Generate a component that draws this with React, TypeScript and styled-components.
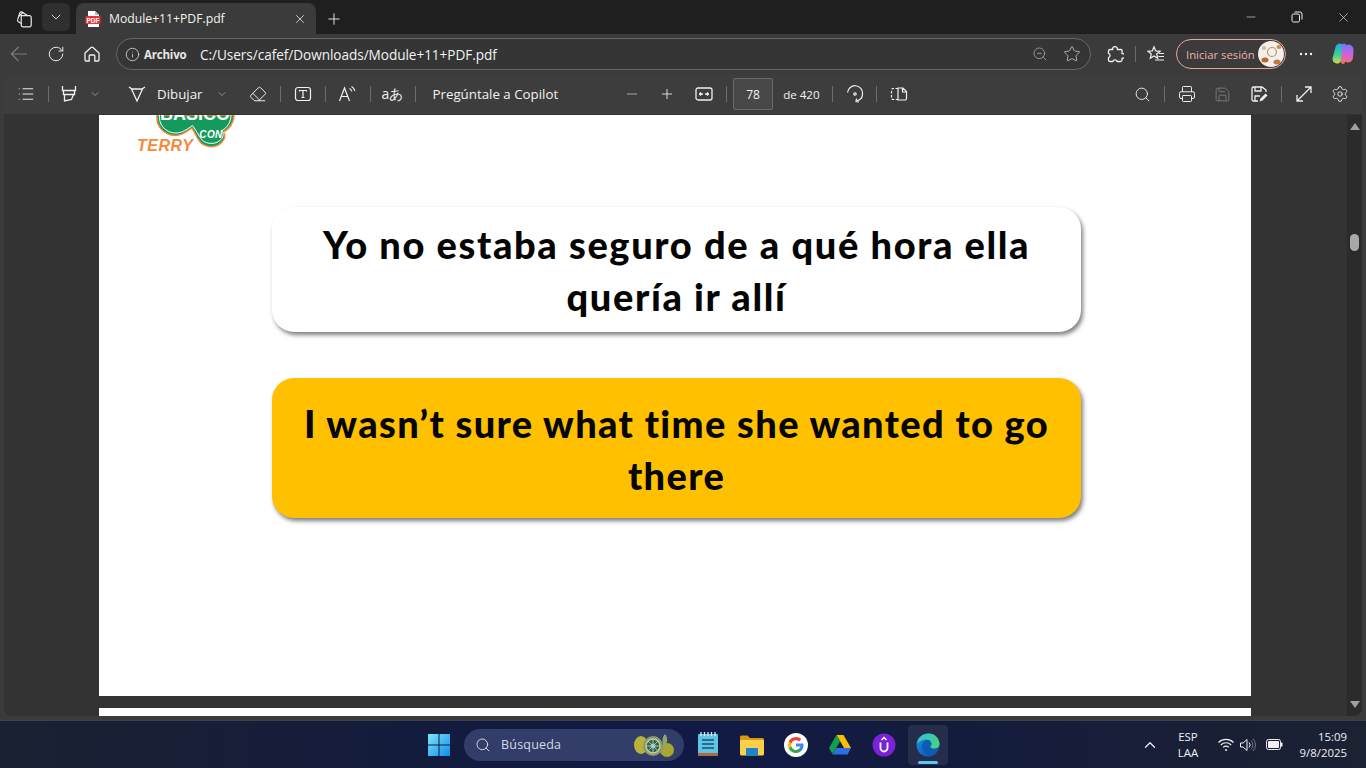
import React from "react"
import styled, { createGlobalStyle } from "styled-components"
import {
  ChevronDown,
  ChevronUp,
  Eraser,
  Info,
  List,
  Minus,
  Plus,
  Printer,
  RotateCw,
  Save,
  Search,
  Settings,
  Star,
  X,
  ZoomOut,
} from "lucide-react"

const GlobalStyle = createGlobalStyle`
  html, body {
    margin: 0;
    padding: 0;
    background: #3b3b3b;
    overflow: hidden;
  }
  * {
    box-sizing: border-box;
  }
`

const Screen = styled.div`
  width: 1366px;
  height: 768px;
  display: flex;
  flex-direction: column;
  overflow: hidden;
  font-family: "Open Sans", "Noto Sans", sans-serif;
  color: #f2f2f2;
  background: #3b3b3b;
`

const TabStrip = styled.div`
  height: 34px;
  flex: none;
  display: flex;
  align-items: flex-end;
  padding-left: 6px;
  background: #1f1f1f;
`

const StripButton = styled.div<{ $w: number; $flush?: boolean; $boxed?: boolean }>`
  width: ${(p) => p.$w}px;
  height: ${(p) => (p.$boxed ? 28 : 31)}px;
  margin-bottom: ${(p) => (p.$boxed ? 3 : 0)}px;
  display: flex;
  align-items: center;
  justify-content: center;
  flex: none;
  border-radius: 6px;
  background: ${(p) => (p.$boxed ? "#2f2f2f" : "transparent")};
`

const Tab = styled.div`
  width: 240px;
  height: 31px;
  margin-left: 6px;
  flex: none;
  display: flex;
  align-items: center;
  padding: 0 9px;
  background: #3b3b3b;
  border-radius: 8px 8px 0 0;
`

const TabTitle = styled.span`
  margin-left: 8px;
  font-size: 12.2px;
  flex: 1;
  white-space: nowrap;
`

const WindowControls = styled.div`
  margin-left: auto;
  display: flex;
  align-items: center;
  height: 34px;
`

const WindowButton = styled.div`
  width: 46px;
  height: 34px;
  display: flex;
  align-items: center;
  justify-content: center;
`

const AddressRow = styled.div`
  height: 40px;
  flex: none;
  display: flex;
  align-items: center;
  background: #3b3b3b;
`

const NavButton = styled.div<{ $w: number; $ml?: number }>`
  width: ${(p) => p.$w}px;
  margin-left: ${(p) => p.$ml ?? 0}px;
  flex: none;
  display: flex;
  align-items: center;
  justify-content: center;
`

const AddressPill = styled.div`
  width: 975px;
  height: 32px;
  margin-left: 6px;
  flex: none;
  display: flex;
  align-items: center;
  padding: 0 2px 0 8px;
  border: 1px solid #666;
  border-radius: 16px;
  background: #353535;
`

const SchemeLabel = styled.span`
  margin-left: 4px;
  font-size: 11.5px;
  font-weight: 700;
  letter-spacing: -0.2px;
  color: #e8e8e8;
  width: 56px;
  flex: none;
`

const AddressText = styled.span`
  font-size: 13.6px;
  letter-spacing: -0.05px;
  flex: 1;
  white-space: nowrap;
`

const PillIcon = styled.div<{ $w: number }>`
  width: ${(p) => p.$w}px;
  flex: none;
  display: flex;
  justify-content: center;
`

const VerticalRule = styled.div<{ $w?: number }>`
  width: ${(p) => p.$w ?? 9}px;
  flex: none;
  display: flex;
  justify-content: center;
  &::before {
    content: "";
    width: 1px;
    height: 16px;
    background: #6c6c6c;
  }
`

const SignInPill = styled.div`
  width: 110px;
  height: 30px;
  margin-left: 3px;
  flex: none;
  display: flex;
  align-items: center;
  justify-content: space-between;
  padding: 0 1px 0 9px;
  border: 1px solid #e8a59c;
  border-radius: 15px;
  font-size: 11.3px;
  color: #f0b0a8;
  white-space: nowrap;
`

const Avatar = styled.div`
  width: 26px;
  height: 26px;
  border-radius: 50%;
  overflow: hidden;
  flex: none;
  display: flex;
`

const PdfToolbar = styled.div`
  height: 41px;
  flex: none;
  margin: 0 4px;
  display: flex;
  align-items: center;
  padding: 0 4px;
  background: #3d3d3d;
  border-radius: 8px 8px 0 0;
  border-bottom: 1px solid #333;
`

const Tool = styled.div<{ $w: number; $ml?: number }>`
  width: ${(p) => p.$w}px;
  margin-left: ${(p) => p.$ml ?? 0}px;
  flex: none;
  display: flex;
  align-items: center;
  justify-content: center;
`

const ToolLabel = styled.span<{ $ml?: number; $size?: number }>`
  margin-left: ${(p) => p.$ml ?? 0}px;
  font-size: ${(p) => p.$size ?? 13.3}px;
  flex: none;
  white-space: nowrap;
`

const PageInput = styled.div`
  width: 40px;
  height: 32px;
  margin-left: 5px;
  flex: none;
  display: flex;
  align-items: center;
  justify-content: center;
  font-size: 12px;
  background: #484848;
  border: 1px solid #6a6a6a;
  border-radius: 2px;
`

const ToolGroupRight = styled.div`
  margin-left: auto;
  display: flex;
  align-items: center;
  margin-right: 4px;
`

const Viewer = styled.div`
  flex: 1;
  min-height: 0;
  margin: 0 4px 4px;
  display: flex;
  background: #333333;
  border-radius: 0 0 8px 8px;
  overflow: hidden;
`

const PageColumn = styled.div`
  flex: 1;
  min-width: 0;
  padding-left: 95px;
  display: flex;
  flex-direction: column;
  gap: 12px;
`

const Page = styled.div`
  width: 1152px;
  height: 581px;
  flex: none;
  background: #ffffff;
  display: flex;
  flex-direction: column;
  padding-left: 173px;
`

const NextPage = styled.div`
  width: 1152px;
  flex: 1;
  background: #ffffff;
`

const LogoWrap = styled.div`
  margin-left: -136px;
  height: 40px;
  flex: none;
  display: flex;
`

const PhraseCard = styled.div<{ $accent?: boolean; $h: number; $mt: number; $pt: number }>`
  width: 809px;
  height: ${(p) => p.$h}px;
  margin-top: ${(p) => p.$mt}px;
  padding-top: ${(p) => p.$pt}px;
  flex: none;
  background: ${(p) => (p.$accent ? "#ffc000" : "#ffffff")};
  border-radius: 22px;
  box-shadow: 2px 3px 4px rgba(0, 0, 0, 0.5);
  text-align: center;
  font-family: Lato, "Open Sans", sans-serif;
  font-weight: 900;
  font-size: 38px;
  line-height: 52px;
  letter-spacing: ${(p) => (p.$accent ? 1.35 : 1.6)}px;
  color: #050505;
  white-space: nowrap;
`

const ScrollTrack = styled.div`
  width: 15px;
  flex: none;
  display: flex;
  flex-direction: column;
  align-items: center;
  padding: 8px 0;
  background: #2b2b2b;
`

const ScrollThumb = styled.div`
  width: 9px;
  height: 17px;
  margin-top: 104px;
  border-radius: 5px;
  background: #a8a8a8;
`

const ScrollArrow = styled.div<{ $down?: boolean }>`
  width: 0;
  height: 0;
  border-left: 5px solid transparent;
  border-right: 5px solid transparent;
  ${(p) => (p.$down ? "border-top: 7px solid #a0a0a0; margin-top: auto;" : "border-bottom: 7px solid #a0a0a0;")}
`

const Taskbar = styled.div`
  height: 48px;
  flex: none;
  display: flex;
  align-items: center;
  padding-left: 417px;
  background: linear-gradient(90deg, #1a2132 0%, #141c3d 30%, #101a45 50%, #141c3d 70%, #1b2232 100%);
  border-top: 1px solid #3d414c;
`

const TaskIcon = styled.div<{ $active?: boolean; $ml?: number; $w?: number }>`
  width: ${(p) => p.$w ?? 40}px;
  height: 40px;
  margin-left: ${(p) => p.$ml ?? 4}px;
  flex: none;
  position: relative;
  display: flex;
  align-items: center;
  justify-content: center;
  border-radius: 4px;
  background: ${(p) => (p.$active ? "#262d4b" : "transparent")};
  ${(p) =>
    p.$active &&
    `&::after {
      content: "";
      position: absolute;
      left: 10px;
      bottom: 1px;
      width: 20px;
      height: 3px;
      border-radius: 2px;
      background: #5cc8f5;
    }`}
`

const SearchBox = styled.div`
  width: 220px;
  height: 32px;
  margin-left: 3px;
  flex: none;
  display: flex;
  align-items: center;
  padding: 0 10px 0 11px;
  border-radius: 16px;
  background: #323d69;
  font-size: 12.5px;
  letter-spacing: 0.2px;
  color: #d6d9e4;
`

const SearchText = styled.span`
  margin-left: 10px;
  flex: 1;
`

const Tray = styled.div`
  margin-left: auto;
  display: flex;
  align-items: center;
  padding-right: 19px;
`

const TrayStack = styled.div<{ $w: number; $align: string; $ml?: number }>`
  width: ${(p) => p.$w}px;
  margin-left: ${(p) => p.$ml ?? 0}px;
  flex: none;
  display: flex;
  flex-direction: column;
  align-items: ${(p) => p.$align};
  font-size: 11.4px;
  line-height: 16px;
  color: #eef0f4;
`

const stroke = { strokeWidth: 1.3, color: "#f0f0f0" }

const Tabs = () => (
  <svg width="20" height="20" viewBox="0 0 18 18" fill="none" stroke="#e6e6e6" strokeWidth="1.1">
    <path d="M6.500 6h7.500a1.500 1.500 0 0 1 1.500 1.500v7a1.500 1.500 0 0 1-1.500 1.500H8a1.500 1.500 0 0 1-1.500-1.500z" />
    <path d="M6.500 13l-2.600-1.600a1.500 1.500 0 0 1-.6-1.800L5.200 3.500a1.500 1.500 0 0 1 1.800-.9l5.500 3.400" />
    <path d="M4.500 6.500l3.700-3.600" />
  </svg>
)

const PdfBadge = () => (
  <svg width="16" height="16" viewBox="0 0 16 16">
    <path d="M3 0h7l4 4v12H3z" fill="#fff" />
    <path d="M10 0l4 4h-4z" fill="#bbb" />
    <rect x="0.500" y="5" width="15" height="8" rx="1" fill="#e8353a" />
    <text x="8" y="11.500" textAnchor="middle" fontSize="6.500" fontWeight="700" fontFamily="Liberation Sans" fill="#fff">
      PDF
    </text>
  </svg>
)

const BackArrow = () => (
  <svg width="18" height="18" viewBox="0 0 18 18" fill="none" stroke="#7d7d7d" strokeWidth="1.200">
    <path d="M17 9H1.500M8.500 2L1.500 9l7 7" />
  </svg>
)

const HomeIcon = () => (
  <svg width="18" height="18" viewBox="0 0 18 18" fill="none" stroke="#f0f0f0" strokeWidth="1.300">
    <path d="M2 8l6-5.500a1.500 1.500 0 0 1 2 0L16 8v7a1 1 0 0 1-1 1h-3.200v-5a1 1 0 0 0-1-1H7.200a1 1 0 0 0-1 1v5H3a1 1 0 0 1-1-1z" />
  </svg>
)

const ExtensionIcon = () => (
  <svg width="18" height="18" viewBox="0 0 18 18" fill="none" stroke="#f0f0f0" strokeWidth="1.300" strokeLinejoin="round">
    <path d="M4 4.500h2.800a2.300 2.300 0 1 1 4.400 0H15a1 1 0 0 1 1 1v3.200a2.300 2.300 0 1 1 0 4.400V15a1.500 1.500 0 0 1-1.500 1.500H11a2.200 2.200 0 0 0-4.200 0H4A1.500 1.500 0 0 1 2.500 15v-2.500a2.200 2.200 0 0 0 0-4.200V6A1.500 1.500 0 0 1 4 4.500z" />
  </svg>
)

const FavList = () => (
  <svg width="18" height="18" viewBox="0 0 18 18" fill="none" stroke="#f0f0f0" strokeWidth="1.200">
    <path d="M7 1.800l1.700 4.100 4.300.3-3.300 2.800 1 4.200L7 11l-3.700 2.200 1-4.200L1 6.200l4.300-.3z" />
    <path d="M12 8.500h5M11.500 11.500h5.500M8 15h9" />
  </svg>
)

const Copilot = () => (
  <svg width="24" height="24" viewBox="0 0 24 24" fill="none" strokeLinecap="round">
    <defs>
      <linearGradient id="copA" gradientUnits="userSpaceOnUse" x1="8" y1="1" x2="7" y2="23">
        <stop offset="0" stopColor="#2f9df2" />
        <stop offset="0.550" stopColor="#36d68c" />
        <stop offset="1" stopColor="#f4d73f" />
      </linearGradient>
      <linearGradient id="copB" gradientUnits="userSpaceOnUse" x1="17" y1="2" x2="16" y2="23">
        <stop offset="0" stopColor="#6f7bf5" />
        <stop offset="0.550" stopColor="#d95fd8" />
        <stop offset="1" stopColor="#f5793f" />
      </linearGradient>
    </defs>
    <path d="M17.500 7.500L17 15.500" stroke="url(#copB)" strokeWidth="10" />
    <path d="M9 6L6 17" stroke="url(#copA)" strokeWidth="9" />
    <path d="M13 3.500L12 20" stroke="url(#copB)" strokeWidth="4" />
  </svg>
)

const AvatarArt = () => (
  <svg width="26" height="26" viewBox="0 0 26 26">
    <rect width="26" height="26" fill="#f4efe8" />
    <circle cx="14" cy="11" r="4.500" fill="none" stroke="#b8956f" strokeWidth="1.200" />
    <ellipse cx="7" cy="19" rx="3.500" ry="2.500" fill="#b5682f" />
    <ellipse cx="19" cy="21" rx="3.500" ry="2.500" fill="#c07a40" />
    <ellipse cx="21" cy="6" rx="2.500" ry="2" fill="#c9905f" />
    <ellipse cx="6" cy="7" rx="2" ry="2" fill="#d2b79a" />
  </svg>
)

const Highlighter = () => (
  <svg width="18" height="18" viewBox="0 0 18 18" fill="none" stroke="#f0f0f0" strokeWidth="1.300">
    <path d="M2.500 1v4.500h13V1M3.500 5.500v4h11v-4M4.500 9.500V16l7-1.500 2-5" />
  </svg>
)

const DrawPen = () => (
  <svg width="18" height="18" viewBox="0 0 18 18" fill="none" stroke="#f0f0f0" strokeWidth="1.300">
    <path d="M1 2l3 2h10l3-2M3.500 4L9 16l5.500-12" />
  </svg>
)

const TextBox = () => (
  <svg width="18" height="18" viewBox="0 0 18 18" fill="none" stroke="#f0f0f0" strokeWidth="1.200">
    <rect x="1.500" y="2.500" width="15" height="13" rx="2.500" />
    <path d="M5.500 6.500V5.500h7v1M9 5.500v7M7.500 12.500h3" />
  </svg>
)

const ReadAloud = () => (
  <svg width="18" height="18" viewBox="0 0 18 18" fill="none" stroke="#f0f0f0" strokeWidth="1.200">
    <path d="M1.500 16L6.500 3l5 13M3.200 11.500h6.600" />
    <path d="M11.500 3.500c1.200.6 2 1.500 2.300 3M13.500 1.500c1.800.9 3 2.400 3.300 4.500" />
  </svg>
)

const FitWidth = () => (
  <svg width="18" height="16" viewBox="0 0 18 16" fill="none" stroke="#f0f0f0" strokeWidth="1.300">
    <rect x="1" y="2" width="16" height="12" rx="2" />
    <path d="M4 8h4M4.500 8l1.500-1.500M4.500 8L6 9.500M10 8h4M13.500 8L12 6.500M13.500 8L12 9.500" />
  </svg>
)

const RotatePage = () => (
  <svg width="18" height="18" viewBox="0 0 18 18" fill="none" stroke="#f0f0f0" strokeWidth="1.200">
    <path d="M1.500 7.500A7.500 7.500 0 0 1 16.500 9c0 3.500-2.500 6-5.500 6.800" />
    <path d="M10.500 13.500L10 16.500l3 .5" />
    <circle cx="9" cy="9" r="1.200" />
  </svg>
)

const PageView = () => (
  <svg width="18" height="16" viewBox="0 0 18 16" fill="none" stroke="#f0f0f0" strokeWidth="1.200">
    <path d="M8 2.500H3a1.500 1.500 0 0 0-1.500 1.500v8A1.500 1.500 0 0 0 3 13.500h5" strokeDasharray="2.500 1.500" />
    <path d="M8 2h5l3.500 3.500V12.500A1.500 1.500 0 0 1 15 14H8zM12.500 2v4h4" />
  </svg>
)

const SaveEdit = () => (
  <svg width="18" height="18" viewBox="0 0 18 18" fill="none" stroke="#f0f0f0" strokeWidth="1.300">
    <path d="M8 16H3.500A1.500 1.500 0 0 1 2 14.500v-11A1.500 1.500 0 0 1 3.500 2H12l4 3v2" />
    <path d="M5 2v4h6V2M5 16v-5h5" />
    <path d="M9.500 16.500l1-3 5-5 2 2-5 5z" fill="#f0f0f0" stroke="none" />
  </svg>
)

const ExpandDiagonal = () => (
  <svg width="18" height="18" viewBox="0 0 18 18" fill="none" stroke="#f0f0f0" strokeWidth="1.300">
    <path d="M2 16L16 2M10 2h6v6M2 10v6h6" />
  </svg>
)

const RestoreIcon = () => (
  <svg width="12" height="12" viewBox="0 0 12 12" fill="none" stroke="#f0f0f0" strokeWidth="1">
    <rect x="1" y="3" width="7.500" height="8" rx="1.500" />
    <path d="M3.500 1h5.500A2 2 0 0 1 11 3v5.500" />
  </svg>
)

const Logo = () => (
  <svg width="120" height="40" viewBox="0 0 120 40">
    <path
      d="M21 0c-1 8 3 17 14 20 9 2 15-3 21-7 3 5 4 9 9 15 6 5 16 5 21-1 4-4 3-8 1-10 7-3 11-10 11-17z"
      fill="#139a5c"
      stroke="#f58a3a"
      strokeWidth="1.500"
    />
    <path
      d="M23.500 0c-1 7 3 15 12 17.500 8 2 14-2 21-7 4 5 5 9 10 15 5 4 14 4 18.500-1 3-3 2.500-7 .5-9 6-2.500 9.500-9 9.500-15.500"
      fill="none"
      stroke="#fff"
      strokeWidth="1"
    />
    <text x="59" y="5" textAnchor="middle" fontSize="18" fontWeight="700" fontFamily="Liberation Sans" fill="#fff">
      BASICO
    </text>
    <text x="75" y="23" textAnchor="middle" fontSize="10" fontWeight="700" fontStyle="italic" fontFamily="Liberation Sans" letterSpacing="0.400" fill="#fff">
      CON
    </text>
    <text x="1" y="36" fontSize="16" fontWeight="700" fontStyle="italic" fontFamily="Liberation Sans" letterSpacing="0.500" fill="#f58a3a">
      TERRY
    </text>
  </svg>
)

const WinLogo = () => (
  <svg width="24" height="24" viewBox="0 0 24 24">
    <defs>
      <linearGradient id="win" x1="0" y1="0" x2="1" y2="1">
        <stop offset="0" stopColor="#7fe3fb" />
        <stop offset="1" stopColor="#0f8ee8" />
      </linearGradient>
    </defs>
    <path d="M1 1h10.500v10.500H1zM12.500 1H23v10.500H12.500zM1 12.500h10.500V23H1zM12.500 12.500H23V23H12.500z" fill="url(#win)" />
  </svg>
)

const SearchArt = () => (
  <svg width="40" height="28" viewBox="0 0 40 28">
    <ellipse cx="7" cy="14" rx="7" ry="9" fill="#b7b23a" />
    <ellipse cx="33" cy="19" rx="7" ry="7" fill="#a6a832" />
    <path d="M30 16c-3-6-1-11 1-13 3 3 3 9-1 13z" fill="#8fa86a" />
    <circle cx="19" cy="15" r="10" fill="#8d9480" />
    <circle cx="19" cy="15" r="7" fill="#3a5f5a" stroke="#b6d66c" strokeWidth="1.500" />
    <circle cx="19" cy="15" r="2.500" fill="#63c6d8" />
    <path d="M19 8v14M12 15h14M14 10l10 10M24 10L14 20" stroke="#bdd8c0" strokeWidth="0.800" />
  </svg>
)

const NotepadIcon = () => (
  <svg width="24" height="26" viewBox="0 0 24 26">
    <rect x="2" y="2" width="20" height="22" rx="1" fill="#5ec3e4" />
    <rect x="2" y="21" width="20" height="3" fill="#b06a3a" />
    <path d="M6 8h12M6 12h12M6 16h12" stroke="#14506e" strokeWidth="1.500" />
    <path d="M5 0v4M8.500 0v4M12 0v4M15.500 0v4M19 0v4" stroke="#cfeefa" strokeWidth="1.300" />
  </svg>
)

const FolderIcon = () => (
  <svg width="24" height="22" viewBox="0 0 24 22">
    <path d="M0 3a1.500 1.500 0 0 1 1.500-1.500h6L10 4h12.500A1.500 1.500 0 0 1 24 5.500V8H0z" fill="#d79a13" />
    <path d="M0 6h24v14a1.500 1.500 0 0 1-1.500 1.500h-21A1.500 1.500 0 0 1 0 20z" fill="#fbcf4a" />
    <path d="M7 14h10a1 1 0 0 1 1 1v6.500H6V15a1 1 0 0 1 1-1z" fill="#1a86d0" />
  </svg>
)

const GoogleIcon = () => (
  <svg width="24" height="24" viewBox="0 0 24 24">
    <circle cx="12" cy="12" r="12" fill="#fff" />
    <path d="M19.500 12.200c0-.6 0-1.100-.2-1.600H12v3h4.200a3.600 3.600 0 0 1-1.600 2.400v2h2.600c1.500-1.400 2.300-3.400 2.300-5.800z" fill="#4285f4" />
    <path d="M12 20c2.100 0 3.900-.7 5.200-1.900l-2.600-2a4.800 4.800 0 0 1-7.200-2.500H4.800v2A8 8 0 0 0 12 20z" fill="#34a853" />
    <path d="M7.400 13.600a4.800 4.800 0 0 1 0-3.100v-2H4.800a8 8 0 0 0 0 7.200z" fill="#fbbc05" />
    <path d="M12 7.200c1.200 0 2.200.4 3 1.200l2.300-2.300A8 8 0 0 0 4.800 8.400l2.600 2A4.800 4.800 0 0 1 12 7.200z" fill="#ea4335" />
  </svg>
)

const DriveIcon = () => (
  <svg width="22" height="20" viewBox="0 0 22 20">
    <path d="M7.500 0h7L22 13h-7z" fill="#fbbc04" />
    <path d="M7.500 0L0 13l3.500 6L11 6.500z" fill="#12a14b" />
    <path d="M3.500 19.500L7 13h15l-3.500 6.500z" fill="#2f6fe4" />
  </svg>
)

const ProtonIcon = () => (
  <svg width="24" height="24" viewBox="0 0 24 24">
    <circle cx="12" cy="12" r="11.500" fill="#7a22d6" />
    <path d="M8.500 9.500V15a3.500 3.500 0 0 0 7 0V9.500" fill="none" stroke="#fff" strokeWidth="1.800" />
    <path d="M9.500 7L12 4.500 14.500 7" fill="none" stroke="#fff" strokeWidth="1.500" />
  </svg>
)

const EdgeIcon = () => (
  <svg width="24" height="24" viewBox="0 0 24 24">
    <defs>
      <linearGradient id="edgeA" x1="0" y1="0" x2="1" y2="1">
        <stop offset="0" stopColor="#34c1d6" />
        <stop offset="1" stopColor="#4fd46f" />
      </linearGradient>
      <linearGradient id="edgeB" x1="0" y1="0" x2="1" y2="1">
        <stop offset="0" stopColor="#1a8fe0" />
        <stop offset="1" stopColor="#0b4fa8" />
      </linearGradient>
    </defs>
    <circle cx="12" cy="12" r="11.500" fill="url(#edgeB)" />
    <path d="M1 11C2 4.500 7 .5 12.500.5 19 .5 23.500 5.500 23.500 11c0 3-2.500 4.500-5.500 4.500-2 0-3.500-.6-3.500-1.500 2.500-3 .5-7.500-3.500-7.500C7 6.500 3 8 1 11z" fill="url(#edgeA)" />
    <path d="M6 14c0-3.500 2-6 5-7 2.500 0 4 2 3.500 4.500-.5 1-1 1.500-1 2.500 0 1.500 2 2.500 4.500 2.500 1.500 0 3-.5 4-1.500-1 3-3 6-5.500 7-5 1-10.500-3-10.500-8z" fill="#0d5bb5" />
  </svg>
)

const WifiIcon = () => (
  <svg width="16" height="14" viewBox="0 0 16 14" fill="none" stroke="#f0f0f0" strokeWidth="1.100">
    <path d="M.5 4.500a10.500 10.500 0 0 1 15 0M2.800 7a7.200 7.200 0 0 1 10.400 0M5.200 9.400a3.800 3.800 0 0 1 5.600 0" />
    <circle cx="8" cy="12" r="1" fill="#f0f0f0" stroke="none" />
  </svg>
)

const VolumeIcon = () => (
  <svg width="16" height="14" viewBox="0 0 16 14" fill="none" stroke="#f0f0f0" strokeWidth="1">
    <path d="M.5 5h2.500L7 1.500v11L3 9H.5z" />
    <path d="M9 4.500a3.500 3.500 0 0 1 0 5" />
    <path d="M11 2.500a6.500 6.500 0 0 1 0 9M13 .8a9 9 0 0 1 0 12.400" stroke="#777" />
  </svg>
)

const BatteryIcon = () => (
  <svg width="17" height="11" viewBox="0 0 17 11">
    <rect x="0.500" y="0.500" width="14" height="10" rx="2" fill="none" stroke="#f0f0f0" />
    <rect x="2" y="2" width="11" height="7" rx="0.800" fill="#f0f0f0" />
    <rect x="15" y="3.500" width="1.500" height="4" rx="0.500" fill="#f0f0f0" />
  </svg>
)

const App: React.FC = () => (
  <Screen>
    <GlobalStyle />
    <TabStrip>
      <StripButton $w={36}>
        <Tabs />
      </StripButton>
      <StripButton $w={28} $boxed>
        <ChevronDown size={16} {...stroke} />
      </StripButton>
      <Tab>
        <PdfBadge />
        <TabTitle>Module+11+PDF.pdf</TabTitle>
        <X size={14} {...stroke} />
      </Tab>
      <StripButton $w={36}>
        <Plus size={18} strokeWidth={1.2} color="#f0f0f0" />
      </StripButton>
      <WindowControls>
        <WindowButton>
          <Minus size={14} strokeWidth={1} color="#f0f0f0" />
        </WindowButton>
        <WindowButton>
          <RestoreIcon />
        </WindowButton>
        <WindowButton>
          <X size={15} strokeWidth={1} color="#f0f0f0" />
        </WindowButton>
      </WindowControls>
    </TabStrip>

    <AddressRow>
      <NavButton $w={38}>
        <BackArrow />
      </NavButton>
      <NavButton $w={36}>
        <RotateCw size={18} {...stroke} />
      </NavButton>
      <NavButton $w={36}>
        <HomeIcon />
      </NavButton>
      <AddressPill>
        <Info size={15} strokeWidth={1.2} color="#e6e6e6" />
        <SchemeLabel>Archivo</SchemeLabel>
        <AddressText>C:/Users/cafef/Downloads/Module+11+PDF.pdf</AddressText>
        <PillIcon $w={32}>
          <ZoomOut size={16} strokeWidth={1.2} color="#a8a8a8" />
        </PillIcon>
        <PillIcon $w={32}>
          <Star size={18} strokeWidth={1.2} color="#b8b8b8" />
        </PillIcon>
      </AddressPill>
      <NavButton $w={32} $ml={8}>
        <ExtensionIcon />
      </NavButton>
      <VerticalRule $w={8} />
      <NavButton $w={34}>
        <FavList />
      </NavButton>
      <SignInPill>
        Iniciar sesión
        <Avatar>
          <AvatarArt />
        </Avatar>
      </SignInPill>
      <NavButton $w={40}>
        <svg width="14" height="4" viewBox="0 0 14 4" fill="#f0f0f0">
          <circle cx="2" cy="2" r="1.200" />
          <circle cx="7" cy="2" r="1.200" />
          <circle cx="12" cy="2" r="1.200" />
        </svg>
      </NavButton>
      <NavButton $w={34}>
        <Copilot />
      </NavButton>
    </AddressRow>

    <PdfToolbar>
      <Tool $w={36}>
        <List size={18} {...stroke} />
      </Tool>
      <VerticalRule $w={8} />
      <Tool $w={34}>
        <Highlighter />
      </Tool>
      <Tool $w={18}>
        <ChevronDown size={12} strokeWidth={1.2} color="#c4c4c4" />
      </Tool>
      <Tool $w={30} $ml={18}>
        <DrawPen />
      </Tool>
      <ToolLabel $ml={5}>Dibujar</ToolLabel>
      <Tool $w={18} $ml={11}>
        <ChevronDown size={12} strokeWidth={1.2} color="#c4c4c4" />
      </Tool>
      <Tool $w={34} $ml={10}>
        <Eraser size={18} {...stroke} />
      </Tool>
      <VerticalRule $w={10} />
      <Tool $w={36}>
        <TextBox />
      </Tool>
      <VerticalRule $w={8} />
      <Tool $w={36}>
        <ReadAloud />
      </Tool>
      <VerticalRule $w={10} />
      <Tool $w={34}>
        <ToolLabel $size={14}>aあ</ToolLabel>
      </Tool>
      <VerticalRule $w={12} />
      <ToolLabel $ml={11}>Pregúntale a Copilot</ToolLabel>
      <Tool $w={36} $ml={56}>
        <Minus size={16} strokeWidth={1.5} color="#a8a8a8" />
      </Tool>
      <Tool $w={34}>
        <Plus size={16} {...stroke} />
      </Tool>
      <Tool $w={40}>
        <FitWidth />
      </Tool>
      <VerticalRule $w={4} />
      <PageInput>78</PageInput>
      <ToolLabel $ml={10} $size={11.6}>
        de 420
      </ToolLabel>
      <VerticalRule $w={26} />
      <Tool $w={18}>
        <RotatePage />
      </Tool>
      <VerticalRule $w={26} />
      <Tool $w={18}>
        <PageView />
      </Tool>
      <ToolGroupRight>
        <Tool $w={36}>
          <Search size={17} {...stroke} />
        </Tool>
        <VerticalRule $w={8} />
        <Tool $w={38}>
          <Printer size={18} {...stroke} />
        </Tool>
        <Tool $w={32}>
          <Save size={17} strokeWidth={1.2} color="#808080" />
        </Tool>
        <Tool $w={42}>
          <SaveEdit />
        </Tool>
        <VerticalRule $w={2} />
        <Tool $w={44}>
          <ExpandDiagonal />
        </Tool>
        <Tool $w={28}>
          <Settings size={18} strokeWidth={1.2} color="#f0f0f0" />
        </Tool>
      </ToolGroupRight>
    </PdfToolbar>

    <Viewer>
      <PageColumn>
        <Page>
          <LogoWrap>
            <Logo />
          </LogoWrap>
          <PhraseCard $h={125} $mt={52} $pt={11}>
            Yo no estaba seguro de a qué hora ella
            <br />
            quería ir allí
          </PhraseCard>
          <PhraseCard $accent $h={140} $mt={46} $pt={19}>
            I wasn’t sure what time she wanted to go
            <br />
            there
          </PhraseCard>
        </Page>
        <NextPage />
      </PageColumn>
      <ScrollTrack>
        <ScrollArrow />
        <ScrollThumb />
        <ScrollArrow $down />
      </ScrollTrack>
    </Viewer>

    <Taskbar>
      <TaskIcon $ml={0} $w={44}>
        <WinLogo />
      </TaskIcon>
      <SearchBox>
        <Search size={16} strokeWidth={1.4} color="#dfe2ea" />
        <SearchText>Búsqueda</SearchText>
        <SearchArt />
      </SearchBox>
      <TaskIcon>
        <NotepadIcon />
      </TaskIcon>
      <TaskIcon>
        <FolderIcon />
      </TaskIcon>
      <TaskIcon>
        <GoogleIcon />
      </TaskIcon>
      <TaskIcon>
        <DriveIcon />
      </TaskIcon>
      <TaskIcon>
        <ProtonIcon />
      </TaskIcon>
      <TaskIcon $active>
        <EdgeIcon />
      </TaskIcon>
      <Tray>
        <NavButton $w={24}>
          <ChevronUp size={18} strokeWidth={1.6} color="#f0f0f0" />
        </NavButton>
        <TrayStack $w={36} $align="center" $ml={8}>
          <span>ESP</span>
          <span>LAA</span>
        </TrayStack>
        <NavButton $w={22} $ml={9}>
          <WifiIcon />
        </NavButton>
        <NavButton $w={22}>
          <VolumeIcon />
        </NavButton>
        <NavButton $w={30}>
          <BatteryIcon />
        </NavButton>
        <TrayStack $w={58} $align="flex-end">
          <span>15:09</span>
          <span>9/8/2025</span>
        </TrayStack>
      </Tray>
    </Taskbar>
  </Screen>
)

export default App
